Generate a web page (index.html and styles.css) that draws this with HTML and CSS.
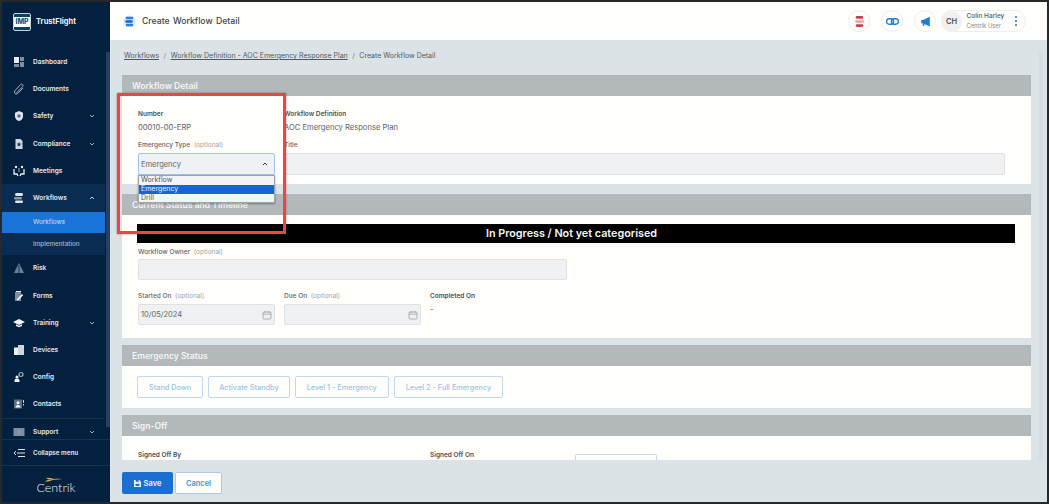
FILE: index.html
```html
<!DOCTYPE html>
<html lang="en">
<head>
<meta charset="utf-8">
<title>Create Workflow Detail</title>
<link rel="stylesheet" href="styles.css">
</head>
<body>
<div class="app">
  <aside class="sidebar">
    <div class="brand">
      <div class="logo"><span>IMP</span></div>
      <span class="brand-name">TrustFlight</span>
    </div>
    <div class="scroller">
      <nav class="nav">
        <a class="nav-item"><svg class="ni" viewBox="0 0 12 12"><rect x="1" y="1" width="5" height="6" fill="#e8edf2"/><rect x="7" y="1" width="4" height="4" fill="#7d8ea1"/><rect x="7" y="6" width="4" height="5" fill="#7d8ea1"/><rect x="1" y="8" width="5" height="3" fill="#7d8ea1"/></svg><span>Dashboard</span></a>
        <a class="nav-item"><svg class="ni" viewBox="0 0 12 12"><path d="M3 10.500 L9.800 3.500a1.500 1.500 0 0 0-2.200-2L1.800 7.800a2 2 0 0 0 2.800 2.800L10 5" fill="none" stroke="#a5b1bd" stroke-width="1"/></svg><span>Documents</span></a>
        <a class="nav-item"><svg class="ni" viewBox="0 0 12 12"><path d="M6 1l4 1.800v3.400c0 2.600-2 4.200-4 4.800-2-.6-4-2.200-4-4.800V2.800z" fill="#dfe5eb"/><circle cx="6" cy="6" r="1.800" fill="#5d7086"/></svg><span>Safety</span><svg class="chev" viewBox="0 0 8 8"><path d="M2 3l2 2 2-2" fill="none" stroke="#9fb0c0" stroke-width="1"/></svg></a>
        <a class="nav-item"><svg class="ni" viewBox="0 0 12 12"><path d="M2.500 1h5l2 2v8h-7z" fill="#cfd7df"/><path d="M6 4l.7 1.500 1.600.2-1.200 1.100.3 1.600L6 7.600l-1.400.8.300-1.600-1.200-1.100 1.600-.2z" fill="#1b3553"/></svg><span>Compliance</span><svg class="chev" viewBox="0 0 8 8"><path d="M2 3l2 2 2-2" fill="none" stroke="#9fb0c0" stroke-width="1"/></svg></a>
        <a class="nav-item"><svg class="ni" viewBox="0 0 12 12"><circle cx="3" cy="2" r="1.200" fill="#e8edf2"/><circle cx="9" cy="2" r="1.200" fill="#e8edf2"/><path d="M1 4v5h3l1 2M11 4v5H8l-1 2" fill="none" stroke="#e8edf2" stroke-width="1.300"/><rect x="5.400" y="3" width="1.200" height="4" fill="#8b9aaa"/></svg><span>Meetings</span></a>
        <div class="nav-group">
          <a class="nav-item open"><svg class="ni" viewBox="0 0 12 12"><rect x="2" y="1" width="8" height="3" rx="1.500" fill="#dfe5eb"/><rect x="1" y="5" width="8" height="2.500" rx="1.200" fill="#8b9aaa"/><rect x="2" y="8.500" width="8" height="2.500" rx="1.200" fill="#dfe5eb"/></svg><span>Workflows</span><svg class="chev" viewBox="0 0 8 8"><path d="M2 5l2-2 2 2" fill="none" stroke="#c5d2df" stroke-width="1"/></svg></a>
          <a class="sub active">Workflows</a>
          <a class="sub">Implementation</a>
        </div>
        <a class="nav-item"><svg class="ni" viewBox="0 0 12 12"><path d="M6 1l5 10H1z" fill="#6d7f92"/><rect x="5.600" y="3" width=".8" height="8" fill="#03203f"/></svg><span>Risk</span></a>
        <a class="nav-item"><svg class="ni" viewBox="0 0 12 12"><path d="M2 2h6v9H2z" fill="#7d8ea1"/><path d="M3 1h5v1H3z" fill="#e8edf2"/><path d="M4 9l5-5 1.200 1.200-5 5H4z" fill="#f2f5f7"/></svg><span>Forms</span></a>
        <a class="nav-item"><svg class="ni" viewBox="0 0 12 12"><path d="M6 2l6 3-6 3-6-3z" fill="#f2f5f7"/><path d="M3 7.200v1.800l3 1.200 3-1.200V7.200L6 8.700z" fill="#f2f5f7"/></svg><span>Training</span><svg class="chev" viewBox="0 0 8 8"><path d="M2 3l2 2 2-2" fill="none" stroke="#9fb0c0" stroke-width="1"/></svg></a>
        <a class="nav-item"><svg class="ni" viewBox="0 0 12 12"><rect x="1" y="3.500" width="5" height="7.500" fill="#f2f5f7"/><rect x="5" y="1" width="6" height="10" fill="#cdd5dd"/></svg><span>Devices</span></a>
        <a class="nav-item"><svg class="ni" viewBox="0 0 12 12"><circle cx="8" cy="3.500" r="2" fill="none" stroke="#aab6c2" stroke-width="1.200"/><circle cx="4" cy="6" r="1.500" fill="#f2f5f7"/><path d="M1.500 11V9.500a2.500 2 0 0 1 5 0V11z" fill="#f2f5f7"/></svg><span>Config</span></a>
        <a class="nav-item"><svg class="ni" viewBox="0 0 12 12"><rect x="1" y="1.500" width="8" height="9" fill="#5d7086"/><circle cx="5" cy="4.700" r="1.500" fill="#f2f5f7"/><path d="M2.500 9.500a2.500 2.500 0 0 1 5 0z" fill="#f2f5f7"/><rect x="10" y="2" width="1" height="3" fill="#cdd5dd"/><rect x="10" y="6" width="1" height="1.500" fill="#cdd5dd"/></svg><span>Contacts</span></a>
        <a class="nav-item support"><svg class="ni" viewBox="0 0 12 12"><rect x=".5" y="2" width="11" height="8" fill="#7d8ea1"/><rect x="5.700" y="4" width=".8" height="4" fill="#a5b1bd"/></svg><span>Support</span><svg class="chev" viewBox="0 0 8 8"><path d="M2 3l2 2 2-2" fill="none" stroke="#9fb0c0" stroke-width="1"/></svg></a>
      </nav>
      <div class="scrollbar"></div>
    </div>
    <a class="collapse"><svg class="ni" viewBox="0 0 12 12"><path d="M4 6h8M5 2.500h7M5 9.500h7M3 4L1 6l2 2" fill="none" stroke="#dfe5eb" stroke-width="1"/></svg><span>Collapse menu</span></a>
    <div class="centrik">
      <svg class="swoosh" viewBox="0 0 24 6"><path d="M2 5.500C8 2.500 14 1.500 23 2.800 16 2.500 12 3.500 6 5.500z" fill="#efb43a"/><path d="M3 1l10 .6-6 1.400z" fill="#efb43a"/></svg>
      <span>Centrik</span>
    </div>
  </aside>

  <div class="main">
    <header class="topbar">
      <svg class="title-icon" viewBox="0 0 14 14"><circle cx="7" cy="7" r="6.500" fill="#d5e6f7"/><rect x="3" y="2" width="8" height="2.600" rx="1.300" fill="#2b80d8"/><rect x="2.500" y="5.700" width="8" height="2.600" rx="1.300" fill="#1b65bd"/><rect x="3" y="9.400" width="8" height="2.600" rx="1.300" fill="#2b80d8"/></svg>
      <h1>Create Workflow Detail</h1>
      <div class="top-actions">
        <span class="round"><svg viewBox="0 0 12 12" class="ri"><rect x="2.500" y="1" width="7" height="2.400" rx="1.200" fill="#c9404c"/><rect x="2" y="4.800" width="8" height="2.400" rx="1.200" fill="#e8a0a6"/><rect x="2.500" y="8.600" width="7" height="2.400" rx="1.200" fill="#c9404c"/></svg></span>
        <span class="round"><svg viewBox="0 0 12 12" class="ri"><rect x=".5" y="3.500" width="6.500" height="5" rx="2.500" fill="none" stroke="#1f7fd6" stroke-width="1.300"/><rect x="5" y="3.500" width="6.500" height="5" rx="2.500" fill="none" stroke="#1f7fd6" stroke-width="1.300"/></svg></span>
        <span class="round"><svg viewBox="0 0 12 12" class="ri"><path d="M2 4.500h1.500L10 1.500v9L3.500 7.500H2z" fill="#1f7fd6"/><rect x="3.500" y="7.500" width="1.500" height="2.500" fill="#1f7fd6"/></svg></span>
        <div class="user">
          <span class="avatar">CH</span>
          <div class="user-text"><b>Colin Harley</b><small>Centrik User</small></div>
          <svg class="kebab" viewBox="0 0 4 12"><circle cx="2" cy="2" r="1" fill="#1f6fc4"/><circle cx="2" cy="6" r="1" fill="#1f6fc4"/><circle cx="2" cy="10" r="1" fill="#1f6fc4"/></svg>
        </div>
      </div>
    </header>

    <div class="content">
      <div class="page">
        <div class="crumbs"><a>Workflows</a><i>/</i><a>Workflow Definition - AOC Emergency Response Plan</a><i>/</i><span>Create Workflow Detail</span></div>

        <section class="card c1">
          <h2>Workflow Detail</h2>
          <div class="card-body grid g1">
            <div class="field"><label>Number</label><p>00010-00-ERP</p></div>
            <div class="field span5"><label>Workflow Definition</label><p>AOC Emergency Response Plan</p></div>
            <div class="field select-field">
              <label class="light">Emergency Type <em>(optional)</em></label>
              <div class="select"><span>Emergency</span><svg viewBox="0 0 8 8"><path d="M2 5l2-2 2 2" fill="none" stroke="#333" stroke-width="1"/></svg></div>
              <ul class="options"><li>Workflow</li><li class="sel">Emergency</li><li>Drill</li></ul>
            </div>
            <div class="field span5"><label class="light">Title</label><div class="input tall"></div></div>
          </div>
        </section>

        <section class="card c2">
          <h2>Current Status and Timeline</h2>
          <div class="card-body">
            <div class="banner">In Progress / Not yet categorised</div>
            <div class="grid g2">
              <div class="field span3"><label class="light">Workflow Owner <em>(optional)</em></label><div class="input"></div></div>
            </div>
            <div class="grid g3">
              <div class="field"><label class="light">Started On <em>(optional)</em></label><div class="input date"><span>10/05/2024</span><svg viewBox="0 0 10 10"><rect x="1" y="2" width="8" height="7" rx="1" fill="none" stroke="#9aa1a8" stroke-width=".8"/><path d="M1 4.200h8M3 1v2M7 1v2" stroke="#9aa1a8" stroke-width=".8"/></svg></div></div>
              <div class="field"><label class="light">Due On <em>(optional)</em></label><div class="input date"><span></span><svg viewBox="0 0 10 10"><rect x="1" y="2" width="8" height="7" rx="1" fill="none" stroke="#9aa1a8" stroke-width=".8"/><path d="M1 4.200h8M3 1v2M7 1v2" stroke="#9aa1a8" stroke-width=".8"/></svg></div></div>
              <div class="field"><label>Completed On</label><p>-</p></div>
            </div>
          </div>
        </section>

        <section class="card c3">
          <h2>Emergency Status</h2>
          <div class="card-body status">
            <button>Stand Down</button>
            <button>Activate Standby</button>
            <button>Level 1 - Emergency</button>
            <button>Level 2 - Full Emergency</button>
          </div>
        </section>

        <section class="card c4">
          <h2>Sign-Off</h2>
          <div class="card-body grid g4">
            <div class="field span2"><label>Signed Off By</label></div>
            <div class="field"><label>Signed Off On</label></div>
            <div class="stub"></div>
          </div>
        </section>
      </div>
      <div class="page-scroll"></div>
    </div>

    <footer class="footer">
      <button class="save"><svg viewBox="0 0 10 10"><path d="M0 0h7.500L10 2.500V10H0z" fill="#e9f2fb"/><rect x="2.500" y="0" width="4" height="2.600" fill="#1a6fd0"/><rect x="2.200" y="5.500" width="5.600" height="3" fill="#1a6fd0"/></svg>Save</button>
      <button class="cancel">Cancel</button>
    </footer>
    <div class="callout"></div>
  </div>
</div>
</body>
</html>
```

FILE: styles.css
```css
* { box-sizing: border-box; }
html, body { margin: 0; height: 100%; overflow: hidden; background: #26282b; }
body { font-family: Inter, "Liberation Sans", sans-serif; color: #4b5158; }
.app { display: flex; width: 1049px; height: 504px; padding: 2px 2px 2px 2px; }

/* Sidebar */
.sidebar { width: 108px; flex: none; background: #03203f; display: flex; flex-direction: column; color: #e6ebf0; font-size: 6.5px; font-weight: 600; }
.brand { height: 46.400px; display: flex; align-items: flex-start; padding: 11px 0 0 11px; gap: 5px; flex: none; }
.logo { width: 18px; height: 18px; background: #0d3f63; border-radius: 2px; border: 1.500px solid #c9d2da; display: flex; align-items: center; justify-content: center; }
.logo span { display: block; width: 100%; background: #fff; color: #0f5a78; font-size: 7px; font-weight: 800; line-height: 10px; text-align: center; }
.brand-name { font-size: 7.500px; font-weight: 700; color: #eef2f5; line-height: 18px; }
.scroller { position: relative; flex: 1; min-height: 0; overflow: hidden; }
.nav { display: flex; flex-direction: column; width: 103px; }
.nav-item { height: 27.200px; display: flex; align-items: center; padding-left: 11px; flex: none; }
.nav-item span { margin-left: 8px; flex: 1; }
.ni { width: 12px; height: 12px; flex: none; }
.chev { width: 8px; height: 8px; margin-right: 9px; flex: none; }
.nav-group { background: #0a2c52; height: 70.400px; flex: none; }
.nav-group .nav-item { height: 27.400px; }
.sub { display: flex; align-items: center; height: 21.500px; padding-left: 31px; font-weight: 500; font-size: 6.300px; color: #a9b9c9; }
.sub.active { background: #1a73d9; color: #bcd7f2; }
.support { border-top: 1px solid #17344f; height: 28px; }
.scrollbar { position: absolute; top: 4px; right: 0; width: 4px; height: 375px; background: #25415f; }
.collapse { height: 27px; flex: none; display: flex; align-items: center; padding-left: 11px; border-top: 1px solid #17344f; border-bottom: 1px solid #17344f; font-size: 6.300px; }
.collapse span { margin-left: 8px; }
.centrik { height: 36px; flex: none; position: relative; display: flex; align-items: flex-end; justify-content: center; padding-bottom: 7px; }
.centrik span { font-family: Lato, sans-serif; font-weight: 300; font-size: 12.500px; line-height: 14px; color: #f0f3f6; }
.swoosh { position: absolute; left: 41px; top: 11px; width: 20px; height: 5px; }

/* Main */
.main { position: relative; flex: 1; min-width: 0; display: flex; flex-direction: column; background: #dbe3e7; }
.topbar { height: 38px; flex: none; background: #fffefb; display: flex; align-items: center; padding: 0 21px 0 13px; }
.title-icon { width: 13px; height: 13px; flex: none; }
.topbar h1 { margin: 0 0 0 6px; font-size: 8.700px; font-weight: 500; color: #3d4349; word-spacing: 1px; }
.top-actions { margin-left: auto; display: flex; align-items: center; gap: 11px; }
.round { width: 22px; height: 22px; border-radius: 50%; border: 1px solid #eceef0; display: flex; align-items: center; justify-content: center; }
.ri { width: 13px; height: 13px; }
.user { margin-left: -6px; height: 22px; width: 85px; border: 1px solid #eceef0; border-radius: 11px; display: flex; align-items: center; }
.avatar { width: 21px; height: 21px; margin-left: -1px; border-radius: 50%; background: #f1f1f0; color: #4a4f55; font-size: 7.500px; font-weight: 600; display: flex; align-items: center; justify-content: center; flex: none; }
.user-text { margin-left: 4.500px; display: flex; flex-direction: column; font-size: 6.500px; line-height: 9.500px; flex: 1; }
.user-text b { font-weight: 500; color: #565b61; }
.user-text small { font-size: 5.800px; color: #85898e; }
.kebab { width: 4px; height: 12px; margin-right: 7px; flex: none; }

.content { flex: 1; min-height: 0; display: flex; overflow: hidden; }
.page { width: 909px; margin-left: 12px; flex: none; }
.page-scroll { width: 4px; margin: 12px 0 0 8px; background: #d3dce1; height: 408px; }
.crumbs { height: 35px; padding: 11px 0 0 2px; font-size: 7px; line-height: 10px; color: #52585e; display: flex; }
.crumbs a { text-decoration: underline; }
.crumbs i { font-style: normal; margin: 0 4.500px; color: #7c8186; }

.card { background: #fffefb; }
.c1 { height: 109px; }
.c2 { height: 144px; margin-top: 10px; }
.c3 { height: 63px; margin-top: 7px; }
.c4 { height: 45px; margin-top: 7px; overflow: hidden; }
.card h2 { margin: 0; height: 21px; background: #b3b8bb; color: #f4f5f5; font-size: 8.600px; font-weight: 600; line-height: 22px; padding-left: 10px; }
.card-body { padding: 0 16px; }
.grid { display: grid; grid-template-columns: repeat(6, 137px); column-gap: 9px; }
.span2 { grid-column: span 2; }
.span3 { grid-column: span 3; }
.span5 { grid-column: span 5; }
.field label { display: block; font-size: 6.500px; line-height: 9px; font-weight: 600; color: #4c5157; }
.field label.light { font-weight: 500; color: #60656b; }
.field em { font-style: normal; font-weight: 400; color: #a0a4a8; margin-left: 2px; }
.field p { margin: 0; font-size: 7.600px; line-height: 10px; color: #5d6268; }
.input { height: 21px; margin-top: 3px; background: #eff1f3; border: 1px solid #dfe2e4; border-radius: 2px; font-size: 7.500px; color: #62676d; }
.input.tall { height: 22px; }
.date { display: flex; align-items: center; justify-content: space-between; padding: 0 2px; }
.date svg { width: 10px; height: 10px; }

.g1 { padding-top: 14px; row-gap: 8px; }
.g1 .field p { margin-top: 4px; }
.select-field { position: relative; }
.select { height: 22px; margin-top: 3px; background: #eff1f3; border: 1px solid #9dc4ec; border-radius: 2px; display: flex; align-items: center; justify-content: space-between; padding: 0 2px; font-size: 7.500px; color: #62676d; }
.select svg { width: 8px; height: 8px; margin-right: 3px; }
.options { position: absolute; top: 34px; left: 0; width: 137px; margin: 0; padding: 0; list-style: none; background: #f2f4f8; border: 1px solid #9ea3a8; box-shadow: 0 1px 2px rgba(0,0,0,.35); font-size: 7px; line-height: 8.800px; color: #54595f; z-index: 2; }
.options li { padding-left: 2px; }
.options .sel { background: #1467d2; color: #eef4fb; }

.banner { margin: 9px 0 0 -1px; height: 19px; background: #000; color: #f5f5f5; font-size: 10.800px; font-weight: 600; line-height: 20px; text-align: center; width: 878px; padding-right: 9px; }
.g2 { margin-top: 5px; }
.g2 .input { margin-top: 2px; }
.g3 { margin-top: 12px; }
.g3 .field p { margin-top: 4px; }

.status { padding: 10px 15px; display: flex; gap: 5px; }
.status button { height: 22px; padding: 0 11px; background: #fffefb; border: 1px solid #bfd8f1; border-radius: 2px; font: 500 7.300px Inter, sans-serif; color: #9cc3ea; }
.status button:nth-child(2) { padding: 0 10px; }

.g4 { padding-top: 15px; }
.stub { height: 20px; margin: 3px 0 0 -1px; width: 82px; border: 1px solid #c5d9ee; border-radius: 2px; }

.footer { height: 42px; flex: none; display: flex; gap: 2px; padding: 12px 0 0 12px; }
.footer button { height: 22px; border-radius: 2px; font: 600 7.500px Inter, sans-serif; }
.save { width: 51px; background: #1a6fd0; color: #eef4fb; border: 0; display: flex; align-items: center; justify-content: center; gap: 3px; }
.save svg { width: 7px; height: 7px; }
.cancel { width: 47px; background: #fffefb; border: 1px solid #a9cbee; color: #4a8fdb; }

.callout { position: absolute; left: 7px; top: 91px; width: 169px; height: 141px; border: 3.500px solid #f24344; box-shadow: 0 0 2px rgba(90,40,40,.5); z-index: 5; }
```
